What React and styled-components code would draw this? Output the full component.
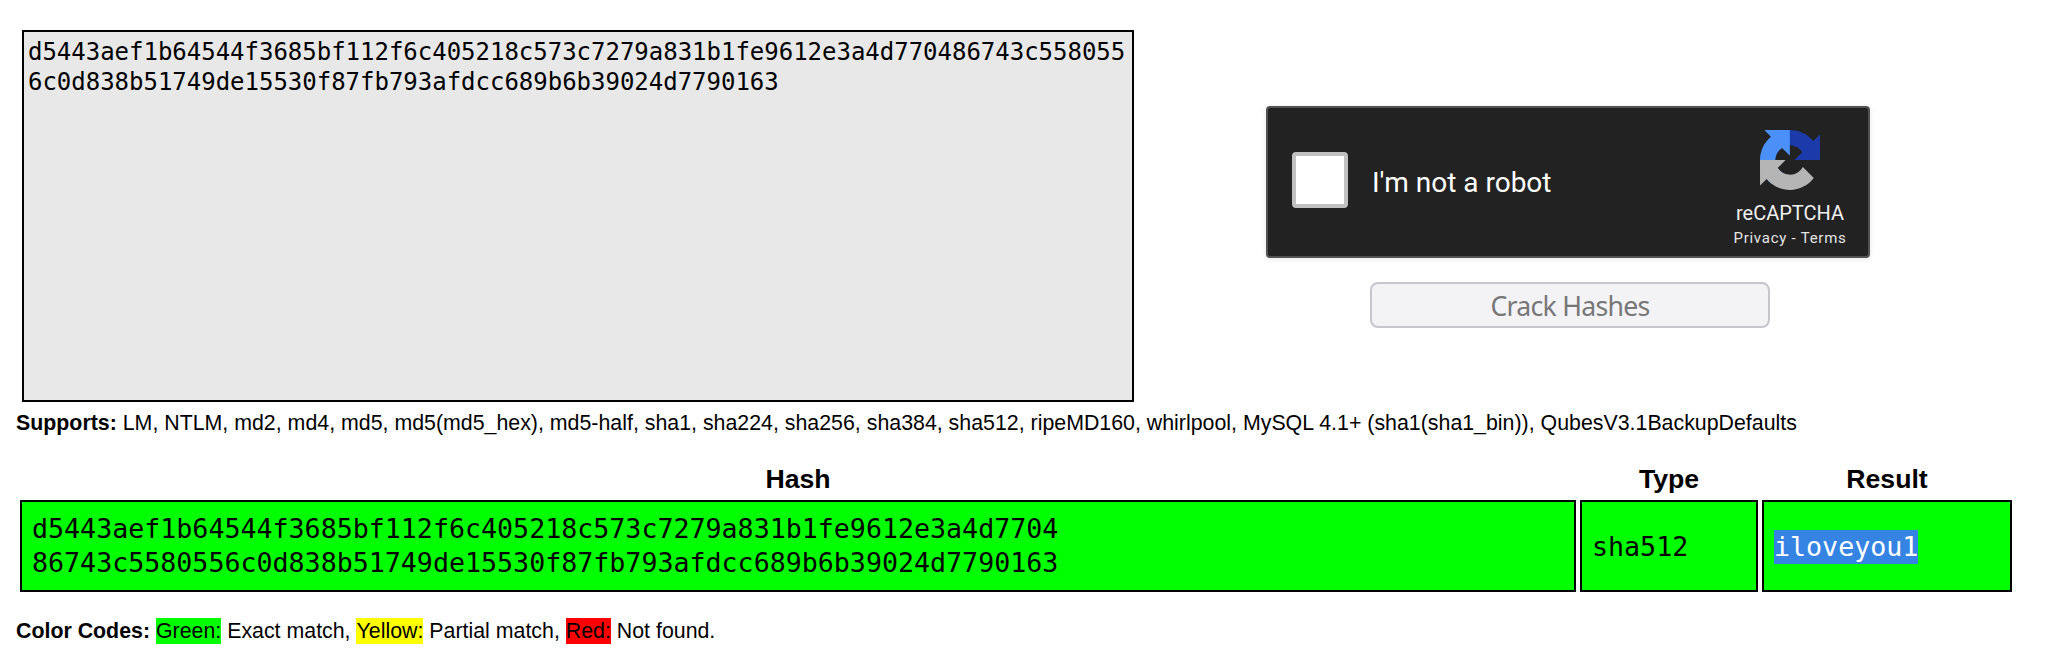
import React from "react";
import styled, { createGlobalStyle } from "styled-components";

const GlobalStyle = createGlobalStyle`
  *, *::before, *::after { box-sizing: border-box; }
  body { margin: 0; background: #fff; color: #000; }
`;

const sans = `"Liberation Sans", Arial, sans-serif`;
const mono = `"DejaVu Sans Mono", monospace`;

const Page = styled.main`
  width: 2066px;
  height: 672px;
  padding: 30px 16px 0;
  overflow: hidden;
  font: 21.333px/26px ${sans};
`;

const Form = styled.section`
  display: flex;
  align-items: flex-start;
  padding-left: 6px;
`;

const HashInput = styled.textarea`
  display: block;
  width: 1112px;
  height: 372px;
  margin: 0;
  padding: 5px 4px 4px;
  resize: none;
  overflow: hidden;
  outline: none;
  border: 2px solid #000;
  border-radius: 0;
  background: #e8e8e8;
  color: #000;
  font: 24px/30px ${mono};
  letter-spacing: -0.012px;
  word-break: break-all;
`;

const Actions = styled.div`
  display: flex;
  flex-direction: column;
  width: 604px;
  margin: 76px 0 0 132px;
`;

const Captcha = styled.div`
  display: flex;
  align-items: center;
  height: 152px;
  padding: 0 22px 0 24px;
  border: 2px solid #525252;
  border-radius: 4px;
  background: #222;
  color: #fff;
  box-shadow: 0 1px 4px 1px rgba(0, 0, 0, 0.08);
  font-family: Roboto, sans-serif;
`;

const Checkbox = styled.span`
  width: 56px;
  height: 56px;
  margin-top: -4px;
  border: 4px solid #c1c1c1;
  border-radius: 4px;
  background: #fff;
`;

const CaptchaLabel = styled.span`
  flex: 1;
  margin-left: 24px;
  padding-top: 1px;
  font-size: 28px;
  line-height: 34px;
`;

const Brand = styled.div`
  display: flex;
  flex-direction: column;
  align-items: center;
  width: 112px;
  height: 100%;
  padding-top: 22px;
`;

const BrandName = styled.span`
  margin-top: 11px;
  color: #f0f0f0;
  font-size: 20px;
  line-height: 24px;
`;

const BrandLinks = styled.span`
  margin-top: 3px;
  color: #e4e4e4;
  font-size: 15px;
  line-height: 20px;
  letter-spacing: 0.75px;
  white-space: nowrap;
`;

const CrackButton = styled.button`
  width: 400px;
  height: 46px;
  margin: 24px 0 0 104px;
  padding: 2px 0 0;
  border: 2px solid #c6c6cd;
  border-radius: 8px;
  background: #f3f3f5;
  color: #777;
  font: 26.667px/40px "Noto Sans", sans-serif;
  letter-spacing: -0.75px;
`;

const Note = styled.p`
  margin: ${(p) => p.$top}px 0 0;
  letter-spacing: 0.01px;
  white-space: nowrap;
`;

const Results = styled.table`
  width: 2000px;
  margin-top: 20px;
  table-layout: fixed;
  border-collapse: separate;
  border-spacing: 4px 0;
`;

const Column = styled.col`
  width: ${(p) => p.$width}px;
`;

const Heading = styled.th`
  height: 44px;
  padding: 2px 0 0;
  vertical-align: middle;
  font: bold 26.667px/30px ${sans};
`;

const Cell = styled.td`
  height: 92px;
  padding: ${(p) => (p.$single ? 2 : 0)}px 10px 0;
  border: 2px solid #000;
  background: #0f0;
  font: 26.667px/34px ${mono};
  letter-spacing: -0.012px;
`;

const Selected = styled.span`
  display: inline-block;
  background: #3584e4;
  color: #fff;
`;

const Swatch = styled.span`
  display: inline-block;
  background: ${(p) => p.$color};
`;

function CaptchaLogo() {
  return (
    <svg width="60" height="60" viewBox="0 0 64 64" aria-hidden="true">
      <path fill="#1c3aa9" d="M64 31.955l-.033-1.37V4.687l-7.16 7.16C50.948 4.674 42.033.093 32.05.093c-10.4 0-19.622 4.96-25.458 12.64l11.736 11.86a15.55 15.55 0 0 1 4.754-5.334c2.05-1.6 4.952-2.906 8.968-2.906.485 0 .86.057 1.135.163 4.976.393 9.288 3.14 11.828 7.124l-8.307 8.307L64 31.953" />
      <path fill="#4a90f8" d="M31.862.094l-1.37.033H4.594l7.16 7.16C4.58 13.147 0 22.06 0 32.046c0 10.4 4.96 19.622 12.64 25.458L24.5 45.768a15.55 15.55 0 0 1-5.334-4.754c-1.6-2.05-2.906-4.952-2.906-8.968 0-.485.057-.86.163-1.135.393-4.976 3.14-9.288 7.124-11.828l8.307 8.307L31.86.095" />
      <path fill="#b5b5b5" d="M.001 32.045l.033 1.37v25.898l7.16-7.16c5.86 7.173 14.774 11.754 24.76 11.754 10.4 0 19.622-4.96 25.458-12.64l-11.736-11.86a15.55 15.55 0 0 1-4.754 5.334c-2.05 1.6-4.952 2.906-8.968 2.906-.485 0-.86-.057-1.135-.163-4.976-.393-9.288-3.14-11.828-7.124l8.307-8.307c-10.522.04-22.4.066-27.295-.005" />
    </svg>
  );
}

const hash =
  "d5443aef1b64544f3685bf112f6c405218c573c7279a831b1fe9612e3a4d7704" +
  "86743c5580556c0d838b51749de15530f87fb793afdcc689b6b39024d7790163";

export default function App() {
  return (
    <Page>
      <GlobalStyle />
      <Form>
        <HashInput spellCheck={false} defaultValue={hash} />
        <Actions>
          <Captcha>
            <Checkbox />
            <CaptchaLabel>I'm not a robot</CaptchaLabel>
            <Brand>
              <CaptchaLogo />
              <BrandName>reCAPTCHA</BrandName>
              <BrandLinks>Privacy - Terms</BrandLinks>
            </Brand>
          </Captcha>
          <CrackButton disabled>Crack Hashes</CrackButton>
        </Actions>
      </Form>
      <Note $top={8}>
        <b>Supports:</b> LM, NTLM, md2, md4, md5, md5(md5_hex), md5-half, sha1, sha224, sha256,
        sha384, sha512, ripeMD160, whirlpool, MySQL 4.1+ (sha1(sha1_bin)), QubesV3.1BackupDefaults
      </Note>
      <Results>
        <colgroup>
          <Column $width={1556} />
          <Column $width={178} />
          <Column $width={250} />
        </colgroup>
        <thead>
          <tr>
            <Heading>Hash</Heading>
            <Heading>Type</Heading>
            <Heading>Result</Heading>
          </tr>
        </thead>
        <tbody>
          <tr>
            <Cell>
              {hash.slice(0, 64)}
              <br />
              {hash.slice(64)}
            </Cell>
            <Cell $single>sha512</Cell>
            <Cell $single>
              <Selected>iloveyou1</Selected>
            </Cell>
          </tr>
        </tbody>
      </Results>
      <Note $top={26}>
        <b>Color Codes:</b> <Swatch $color="#0f0">Green:</Swatch> Exact match,{" "}
        <Swatch $color="#ff0">Yellow:</Swatch> Partial match,{" "}
        <Swatch $color="#f00">Red:</Swatch> Not found.
      </Note>
    </Page>
  );
}
